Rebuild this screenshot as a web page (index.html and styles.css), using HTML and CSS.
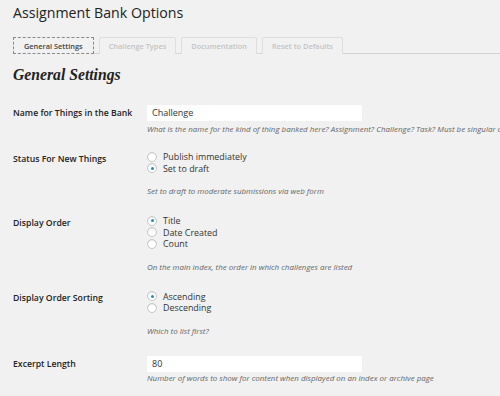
FILE: index.html
```html
<!DOCTYPE html>
<html lang="en">
<head>
    <meta charset="UTF-8">
    <title>Assignment Bank Options</title>
    <link rel="stylesheet" href="styles.css">
</head>
<body>
    <div class="wrap">
        <h1>Assignment Bank Options</h1>

        <div class="tabs">
            <span class="tab active">General Settings</span>
            <span class="tab">Challenge Types</span>
            <span class="tab">Documentation</span>
            <span class="tab">Reset to Defaults</span>
        </div>

        <h2>General Settings</h2>

        <div class="row row-name">
            <div class="label">Name for Things in the Bank</div>
            <div class="field">
                <div class="text-input">Challenge</div>
                <p class="desc desc-tight">What is the name for the kind of thing banked here? Assignment? Challenge? Task? Must be singular or the plural will be wrong</p>
            </div>
        </div>

        <div class="row row-status">
            <div class="label radio-label">Status For New Things</div>
            <div class="field">
                <div class="radio-line"><span class="radio"></span>Publish immediately</div>
                <div class="radio-line"><span class="radio checked"></span>Set to draft</div>
                <p class="desc">Set to draft to moderate submissions via web form</p>
            </div>
        </div>

        <div class="row row-order">
            <div class="label radio-label">Display Order</div>
            <div class="field">
                <div class="radio-line"><span class="radio checked"></span>Title</div>
                <div class="radio-line"><span class="radio"></span>Date Created</div>
                <div class="radio-line"><span class="radio"></span>Count</div>
                <p class="desc">On the main index, the order in which challenges are listed</p>
            </div>
        </div>

        <div class="row row-sort">
            <div class="label radio-label">Display Order Sorting</div>
            <div class="field">
                <div class="radio-line"><span class="radio checked"></span>Ascending</div>
                <div class="radio-line"><span class="radio"></span>Descending</div>
                <p class="desc">Which to list first?</p>
            </div>
        </div>

        <div class="row row-excerpt">
            <div class="label">Excerpt Length</div>
            <div class="field">
                <div class="text-input">80</div>
                <p class="desc desc-close">Number of words to show for content when displayed on an index or archive page</p>
            </div>
        </div>
    </div>
</body>
</html>
```

FILE: styles.css
```css
body {
    margin: 0;
    background-color: #f1f1f1;
    font-family: "Open Sans", "Noto Sans", sans-serif;
    color: #333;
    overflow: hidden;
}
.wrap {
    padding-left: 13px;
}
h1 {
    margin: 0;
    padding-top: 3px;
    font-size: 14.2px;
    font-weight: 400;
    line-height: 20px;
    color: #222;
}
.tabs {
    display: flex;
    gap: 5px;
    margin-top: 14px;
    border-bottom: 1px solid #d4d4d4;
}
.tab {
    height: 16px;
    line-height: 16px;
    padding: 0 9px;
    font-size: 7.4px;
    font-weight: 600;
    color: #c4c4c4;
    border: 1px solid #dedede;
    border-bottom: none;
    border-radius: 2px 2px 0 0;
    margin-bottom: -1px;
    background-color: #f1f1f1;
}
.tab.active {
    padding: 0 10px;
    color: #444;
    border: 1px dashed #8a8a8a;
    border-radius: 0;
    height: 15px;
}
h2 {
    margin: 11px 0 0;
    font-family: "Liberation Serif", "DejaVu Serif", serif;
    font-style: italic;
    font-weight: 700;
    font-size: 15.7px;
    line-height: 20px;
    color: #222;
}
.row {
    display: grid;
    grid-template-columns: 134px 1fr;
    white-space: nowrap;
}
.label {
    font-size: 8.7px;
    font-weight: 600;
    line-height: 16px;
    color: #222;
}
.radio-label {
    line-height: 11.5px;
    padding-top: 2.5px;
}
.text-input {
    width: 210px;
    height: 16px;
    line-height: 16px;
    padding-left: 5px;
    background-color: #fff;
    font-size: 9px;
    color: #333;
}
.radio-line {
    display: flex;
    align-items: center;
    height: 11.5px;
    font-size: 8.9px;
    color: #333;
}
.radio {
    width: 8px;
    height: 8px;
    border: 1px solid #c6c6c6;
    border-radius: 50%;
    background-color: #fff;
    box-shadow: inset 0 1px 1px rgba(0, 0, 0, 0.08);
    margin-right: 6px;
    position: relative;
}
.radio.checked::after {
    content: "";
    position: absolute;
    left: 2.5px;
    top: 2.5px;
    width: 3px;
    height: 3px;
    border-radius: 50%;
    background-color: #1e8cbe;
}
.desc {
    margin: 12px 0 0;
    font-size: 7.95px;
    font-style: italic;
    line-height: 11px;
    color: #666;
}
.desc-tight {
    margin-top: 3px;
}
.desc-close {
    margin-top: 1px;
}
.row-name {
    margin-top: 20px;
}
.row-status {
    margin-top: 16px;
}
.row-order {
    margin-top: 18px;
}
.row-sort {
    margin-top: 18px;
}
.row-excerpt {
    margin-top: 19.5px;
}
```
